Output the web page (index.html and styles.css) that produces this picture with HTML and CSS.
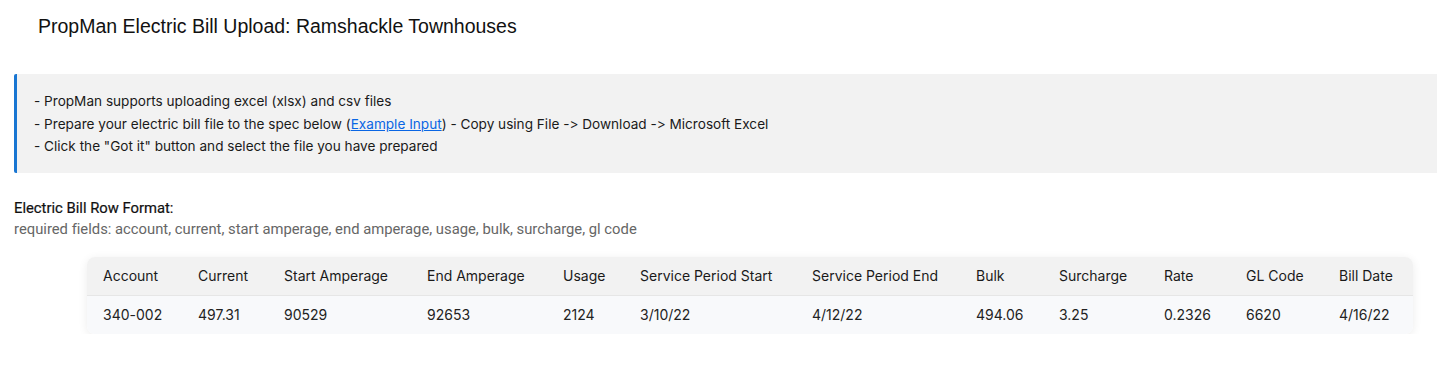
FILE: index.html
```html
<!DOCTYPE html>
<html lang="en">
<head>
    <meta charset="UTF-8">
    <title>PropMan Electric Bill Upload</title>
    <link rel="stylesheet" href="styles.css">
</head>
<body>
    <h1 class="page-title">PropMan Electric Bill Upload: Ramshackle Townhouses</h1>

    <div class="callout">
        <p>- PropMan supports uploading excel (xlsx) and csv files</p>
        <p>- Prepare your electric bill file to the spec below (<a href="#">Example Input</a>) - Copy using File -&gt; Download -&gt; Microsoft Excel</p>
        <p>- Click the "Got it" button and select the file you have prepared</p>
    </div>

    <div class="format">
        <div class="format-title">Electric Bill Row Format:</div>
        <div class="format-note">required fields: account, current, start amperage, end amperage, usage, bulk, surcharge, gl code</div>
    </div>

    <div class="table-wrap">
        <table class="bill-table">
            <colgroup>
                <col class="c-account">
                <col class="c-current">
                <col class="c-start">
                <col class="c-end">
                <col class="c-usage">
                <col class="c-pstart">
                <col class="c-pend">
                <col class="c-bulk">
                <col class="c-surcharge">
                <col class="c-rate">
                <col class="c-gl">
                <col class="c-date">
            </colgroup>
            <thead>
                <tr>
                    <th>Account</th>
                    <th>Current</th>
                    <th>Start Amperage</th>
                    <th>End Amperage</th>
                    <th>Usage</th>
                    <th>Service Period Start</th>
                    <th>Service Period End</th>
                    <th>Bulk</th>
                    <th>Surcharge</th>
                    <th>Rate</th>
                    <th>GL Code</th>
                    <th>Bill Date</th>
                </tr>
            </thead>
            <tbody>
                <tr>
                    <td>340-002</td>
                    <td>497.31</td>
                    <td>90529</td>
                    <td>92653</td>
                    <td>2124</td>
                    <td>3/10/22</td>
                    <td>4/12/22</td>
                    <td>494.06</td>
                    <td>3.25</td>
                    <td>0.2326</td>
                    <td>6620</td>
                    <td>4/16/22</td>
                </tr>
            </tbody>
        </table>
    </div>
</body>
</html>
```

FILE: styles.css
```css
body {
    margin: 0;
    padding: 0 0 0 14px;
    background-color: white;
    font-family: Inter, "Noto Sans", sans-serif;
    font-variant-ligatures: none;
    font-feature-settings: "calt" 0;
    color: #222;
}
.page-title {
    font-family: "Liberation Sans", Arial, sans-serif;
    font-size: 19.5px;
    font-weight: normal;
    color: #111;
    margin: 0;
    padding: 14px 0 0 24px;
    line-height: 24px;
}
.callout {
    margin-top: 36px;
    background-color: #f2f2f2;
    border-left: 3px solid #1976d2;
    border-radius: 2px 0 0 2px;
    padding: 16px 17px 15px;
    font-size: 13.6px;
    line-height: 22.5px;
    color: #1a1a1a;
}
.callout p {
    margin: 0;
}
.callout a {
    color: #0a66e4;
    text-decoration: underline;
}
.format {
    margin-top: 25px;
    font-family: Roboto, sans-serif;
}
.format-title {
    font-size: 14.8px;
    line-height: 20px;
    color: #111;
    -webkit-text-stroke: 0.2px #111;
}
.format-note {
    font-size: 14.8px;
    line-height: 22px;
    color: #666;
}
.table-wrap {
    margin: 17px 0 0 73px;
    width: 1326px;
    border-radius: 8px;
    overflow: hidden;
    box-shadow: 0 2px 10px rgba(0,0,0,0.08);
}
.bill-table {
    width: 100%;
    table-layout: fixed;
    border-collapse: collapse;
    font-size: 14px;
}
.bill-table th,
.bill-table td {
    text-align: left;
    padding: 0 16px;
    height: 38px;
    white-space: nowrap;
}
.bill-table th {
    background-color: #f2f2f2;
    font-weight: normal;
    color: #1a1a1a;
}
.bill-table td {
    background-color: #f8f9fb;
    color: #222;
    border-top: 1px solid #e6e6e6;
}
.c-account { width: 95px; }
.c-current { width: 86px; }
.c-start { width: 143px; }
.c-end { width: 136px; }
.c-usage { width: 77px; }
.c-pstart { width: 172px; }
.c-pend { width: 164px; }
.c-bulk { width: 83px; }
.c-surcharge { width: 105px; }
.c-rate { width: 82px; }
.c-gl { width: 93px; }
.c-date { width: 90px; }
```
